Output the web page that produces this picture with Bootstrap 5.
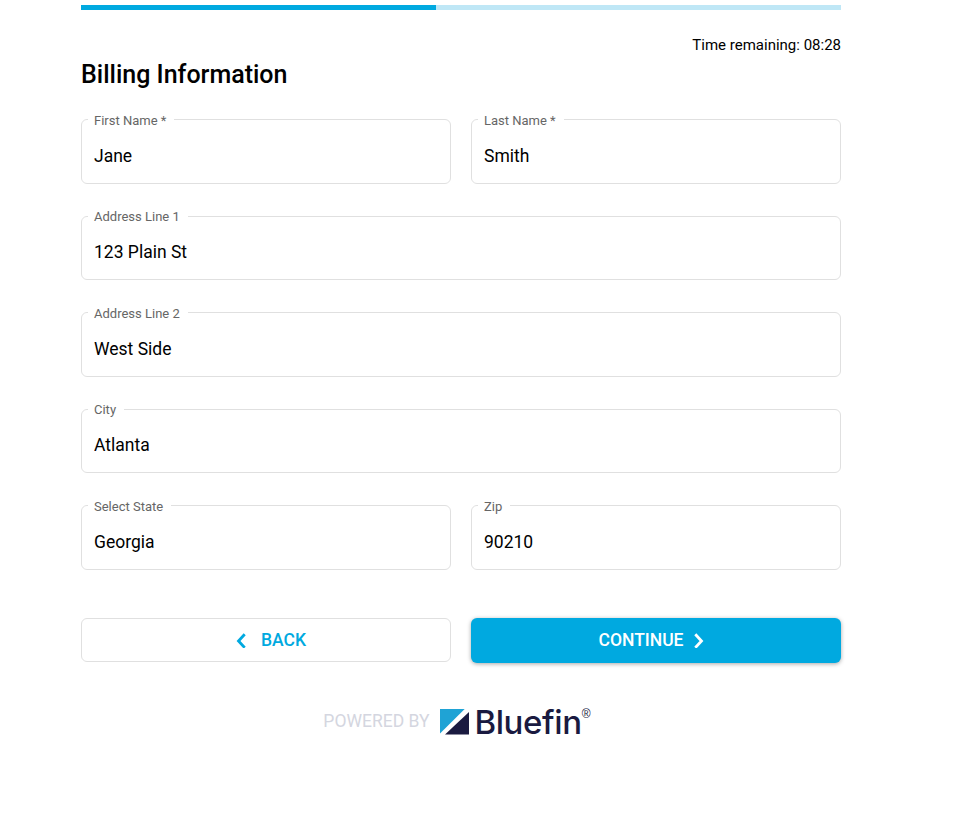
<!doctype html>
<html lang="en"><head><meta charset="utf-8"><title>Billing Information</title>
<link href="https://cdn.jsdelivr.net/npm/bootstrap@5.3.0/dist/css/bootstrap.min.css" rel="stylesheet">
<style>
body{font-family:Roboto,sans-serif;color:#000;background:#fff}
.pay-wrap{width:760px;margin-left:81px;padding-top:5px}
.pay-progress{height:5px;border-radius:0;background:#bfe7f6}
.pay-progress .progress-bar{background:#00a9e0}
.pay-time{font-size:15px;line-height:20px;margin-top:25px}
.pay-title{font-size:25px;font-weight:500;line-height:28px;margin:6px 0 0}
.pay-rows{margin-top:22.800px;display:flex;flex-direction:column;gap:24.5px}
.pay-field{border:1px solid #e0e0e0;border-radius:6px;padding:0 6px 0;margin:0;height:72px;min-width:0;width:100%}
.pay-field legend{float:none;width:auto;font-size:13px;line-height:14px;color:#666;padding:2px 8px 0 6px;margin:0}
.pay-field input{display:block;width:100%;border:0;outline:0;padding:0 6px;margin-top:14px;height:28px;font-size:17.5px;color:#000;background:transparent;font-family:inherit}
.pay-cols{display:grid;grid-template-columns:370px 370px;gap:20px}
.pay-btns{margin-top:48px}
.pay-btn{height:44px;border-radius:6px;font-size:17.5px;font-weight:500;line-height:1;display:flex;align-items:center;justify-content:center;padding:0;font-family:inherit}
.pay-back{border:1px solid #e0e0e0;color:#00a9e0;background:#fff;gap:15px;padding-top:1px}
.pay-back:hover{color:#00a9e0}
.pay-next{border:0;color:#fff;background:#00a9e0;gap:10px;height:45px;box-shadow:0 1px 4px rgba(0,0,0,.35)}
.pay-next:hover{color:#fff;background:#00a9e0}
.pay-foot{margin-top:43px;gap:11px;margin-left:-7px}
.pay-powered{font-size:17.5px;color:#d4d6e0;font-weight:400;margin-bottom:2px;margin-left:-1px}
.pay-brand{font-family:Inter,sans-serif;font-weight:500;font-size:33px;line-height:32px;color:#1a1a40;letter-spacing:-.4px;position:relative;margin-left:-6px;padding-right:9px}
.pay-reg{position:absolute;right:0;top:2px;font-family:"Liberation Sans",sans-serif;font-size:12px;line-height:12px;letter-spacing:0;font-weight:400}
</style></head>
<body>
<main class="pay-wrap">
  <div class="progress pay-progress"><div class="progress-bar" style="width:46.7%"></div></div>
  <div class="pay-time text-end">Time remaining: 08:28</div>
  <h1 class="pay-title">Billing Information</h1>
  <form class="pay-rows">
    <div class="pay-cols">
      <fieldset class="pay-field"><legend>First Name *</legend><input value="Jane"></fieldset>
      <fieldset class="pay-field"><legend>Last Name *</legend><input value="Smith"></fieldset>
    </div>
    <fieldset class="pay-field"><legend>Address Line 1</legend><input value="123 Plain St"></fieldset>
    <fieldset class="pay-field"><legend>Address Line 2</legend><input value="West Side"></fieldset>
    <fieldset class="pay-field"><legend>City</legend><input value="Atlanta"></fieldset>
    <div class="pay-cols">
      <fieldset class="pay-field"><legend>Select State</legend><input value="Georgia"></fieldset>
      <fieldset class="pay-field"><legend>Zip</legend><input value="90210"></fieldset>
    </div>
  </form>
  <div class="pay-cols pay-btns">
    <button type="button" class="btn pay-btn pay-back">
      <svg width="20" height="16" viewBox="-10 -1 20 16" aria-hidden="true"><path d="M8.700 1.300 2.500 8l6.200 6.700" fill="none" stroke="currentColor" stroke-width="2.800"/></svg>BACK</button>
    <button type="button" class="btn pay-btn pay-next">CONTINUE
      <svg width="20" height="16" viewBox="0 -1 20 16" aria-hidden="true"><path d="M1.300 1.300 7.500 8l-6.200 6.700" fill="none" stroke="currentColor" stroke-width="2.800"/></svg></button>
  </div>
  <div class="pay-foot d-flex align-items-center justify-content-center">
    <span class="pay-powered">POWERED BY</span>
    <svg width="29" height="26" viewBox="0 0 29 26" aria-hidden="true"><path d="M0 0H24.700L0 24.500Z" fill="#1fa3d5"/><path d="M29 3V25.500H5Z" fill="#1a1a40"/></svg>
    <span class="pay-brand">Bluefin<span class="pay-reg">®</span></span>
  </div>
</main>
<script src="https://cdn.jsdelivr.net/npm/bootstrap@5.3.0/dist/js/bootstrap.bundle.min.js"></script>
</body></html>
